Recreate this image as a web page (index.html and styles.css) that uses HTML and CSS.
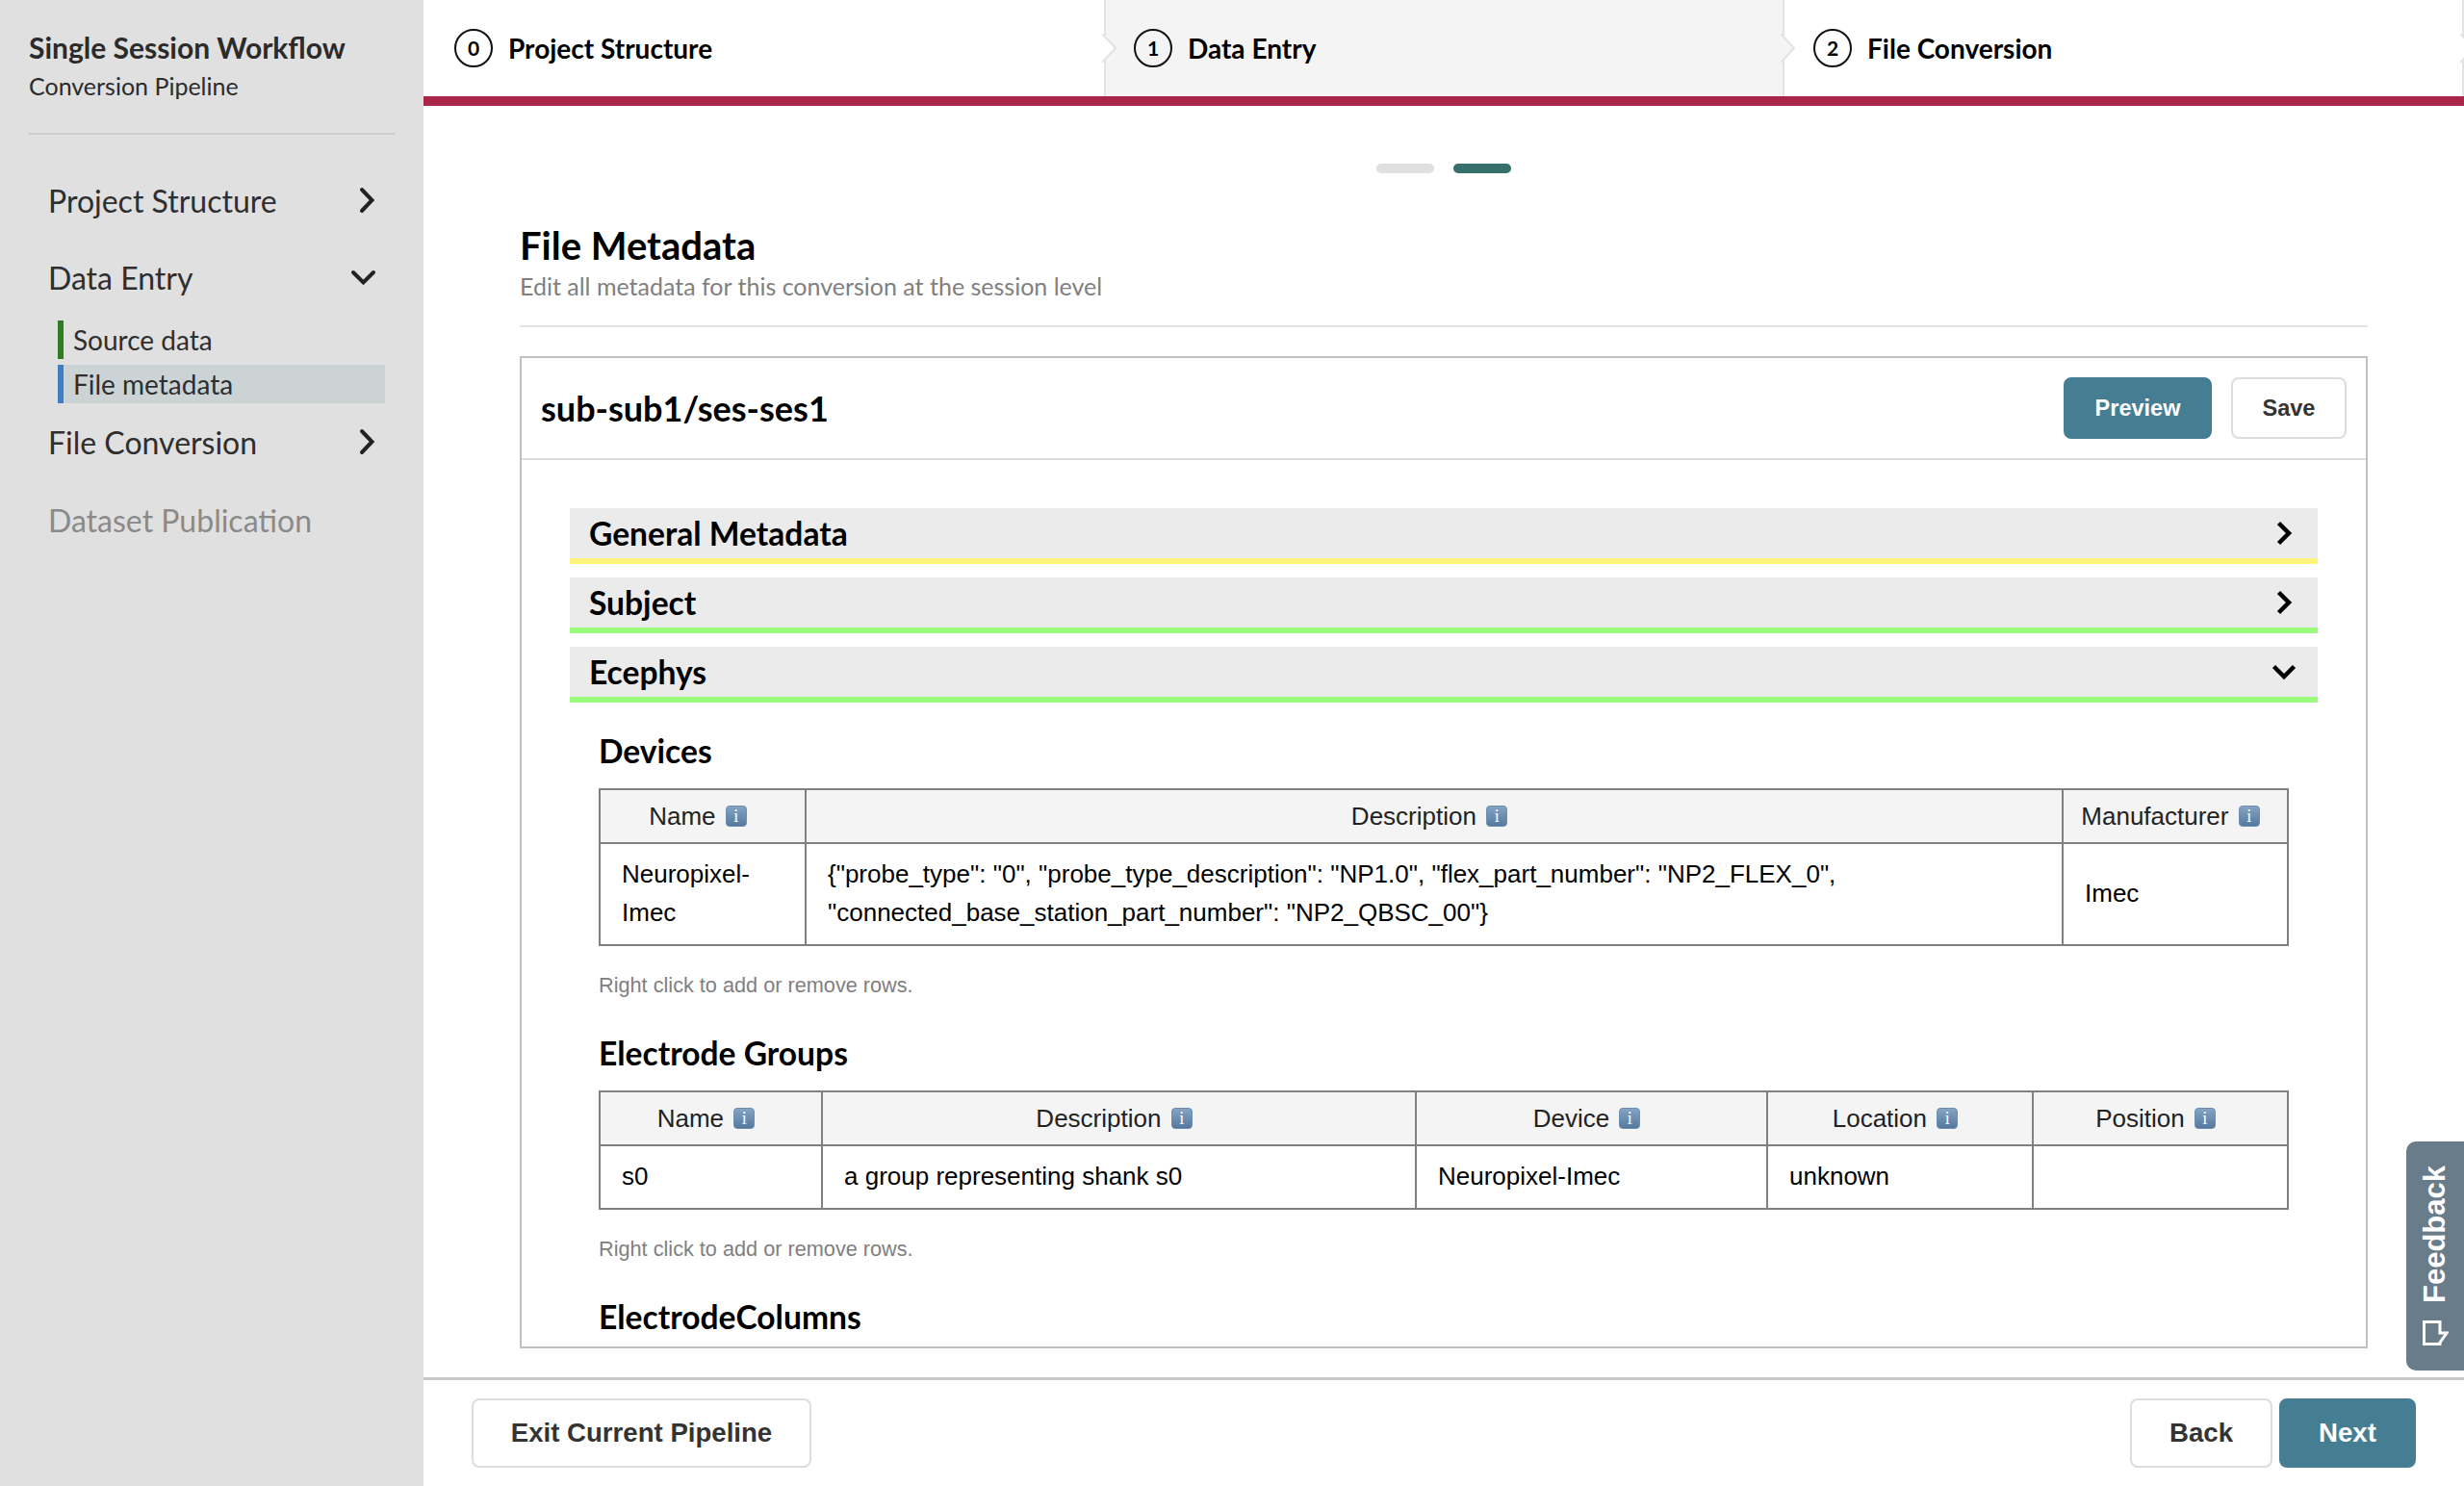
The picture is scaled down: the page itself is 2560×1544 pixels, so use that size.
FILE: index.html
```html
<!DOCTYPE html>
<html>
<head>
    <meta charset="utf-8">
    <title>Single Session Workflow</title>
    <link rel="stylesheet" href="styles.css">
</head>
<body>
    <div class="app">
        <div class="sidebar">
            <div class="side-head">
                <div class="side-title">Single Session Workflow</div>
                <div class="side-sub">Conversion Pipeline</div>
            </div>
            <div class="nav-item first">
                <span>Project Structure</span>
                <svg class="nav-chev" viewBox="0 0 30 30"><polyline points="12,4 22.5,15 12,26"/></svg>
            </div>
            <div class="nav-item">
                <span>Data Entry</span>
                <svg class="nav-chev" viewBox="0 0 30 30"><polyline points="3,10 13.5,20.5 24,10"/></svg>
            </div>
            <div class="sub-items">
                <div class="sub-item done">Source data</div>
                <div class="sub-item active">File metadata</div>
            </div>
            <div class="nav-item conv">
                <span>File Conversion</span>
                <svg class="nav-chev" viewBox="0 0 30 30"><polyline points="12,4 22.5,15 12,26"/></svg>
            </div>
            <div class="nav-item disabled">
                <span>Dataset Publication</span>
            </div>
        </div>

        <div class="main">
            <div class="steps">
                <div class="step">
                    <span class="step-num">0</span>Project Structure
                    <svg class="step-arrow" viewBox="0 0 15 30"><polygon class="fill-white" points="0,0 14,15 0,30"/><polyline points="0,0 14,15 0,30"/></svg>
                </div>
                <div class="step current">
                    <span class="step-num">1</span>Data Entry
                    <svg class="step-arrow" viewBox="0 0 15 30"><polygon class="fill-grey" points="0,0 14,15 0,30"/><polyline points="0,0 14,15 0,30"/></svg>
                </div>
                <div class="step">
                    <span class="step-num">2</span>File Conversion
                    <svg class="step-arrow" viewBox="0 0 15 30"><polygon class="fill-white" points="0,0 14,15 0,30"/><polyline points="0,0 14,15 0,30"/></svg>
                </div>
            </div>

            <div class="content">
                <div class="dots">
                    <span class="dot"></span>
                    <span class="dot on"></span>
                </div>
                <h1 class="page-title">File Metadata</h1>
                <div class="page-sub">Edit all metadata for this conversion at the session level</div>

                <div class="card">
                    <div class="card-head">
                        <div class="card-title">sub-sub1/ses-ses1</div>
                        <button class="btn small primary">Preview</button>
                        <button class="btn small">Save</button>
                    </div>
                    <div class="card-body">
                        <div class="acc warn">
                            <span>General Metadata</span>
                            <svg class="acc-chev" viewBox="0 0 28 28"><polyline points="8.5,3.5 19,14 8.5,24.5"/></svg>
                        </div>
                        <div class="acc ok">
                            <span>Subject</span>
                            <svg class="acc-chev" viewBox="0 0 28 28"><polyline points="8.5,3.5 19,14 8.5,24.5"/></svg>
                        </div>
                        <div class="acc ok">
                            <span>Ecephys</span>
                            <svg class="acc-chev" viewBox="0 0 28 28"><polyline points="3.5,8.5 14,19 24.5,8.5"/></svg>
                        </div>

                        <div class="acc-body">
                            <h3 class="tbl-title devices-title">Devices</h3>
                            <table class="tbl devices">
                                <thead>
                                    <tr>
                                        <th>Name <i class="info">i</i></th>
                                        <th>Description <i class="info">i</i></th>
                                        <th>Manufacturer <i class="info">i</i></th>
                                    </tr>
                                </thead>
                                <tbody>
                                    <tr>
                                        <td>Neuropixel-Imec</td>
                                        <td>{"probe_type": "0", "probe_type_description": "NP1.0", "flex_part_number": "NP2_FLEX_0", "connected_base_station_part_number": "NP2_QBSC_00"}</td>
                                        <td>Imec</td>
                                    </tr>
                                </tbody>
                            </table>
                            <p class="hint">Right click to add or remove rows.</p>

                            <h3 class="tbl-title">Electrode Groups</h3>
                            <table class="tbl groups">
                                <thead>
                                    <tr>
                                        <th>Name <i class="info">i</i></th>
                                        <th>Description <i class="info">i</i></th>
                                        <th>Device <i class="info">i</i></th>
                                        <th>Location <i class="info">i</i></th>
                                        <th>Position <i class="info">i</i></th>
                                    </tr>
                                </thead>
                                <tbody>
                                    <tr>
                                        <td>s0</td>
                                        <td>a group representing shank s0</td>
                                        <td>Neuropixel-Imec</td>
                                        <td>unknown</td>
                                        <td></td>
                                    </tr>
                                </tbody>
                            </table>
                            <p class="hint">Right click to add or remove rows.</p>

                            <h3 class="tbl-title">ElectrodeColumns</h3>
                        </div>
                    </div>
                </div>
            </div>

            <div class="footer">
                <button class="btn large exit">Exit Current Pipeline</button>
                <button class="btn large back">Back</button>
                <button class="btn large primary next">Next</button>
            </div>
        </div>
    </div>

    <div class="feedback">
        <svg class="feedback-icon" viewBox="0 0 27 26"><path d="M1.5 1.5 H18 V13 H25 L18 23 V24.5 H1.5 Z"/></svg>
        <span>Feedback</span>
    </div>
</body>
</html>
```

FILE: styles.css
```css
/*page*/
html, body {
    margin: 0;
    height: 100%;
    background: white;
}

body {
    font-family: Lato, "Open Sans", sans-serif;
    color: black;
    overflow: hidden;
}

.app {
    display: flex;
    height: 1544px;
}

/*sidebar*/
.sidebar {
    width: 440px;
    flex: none;
    background-color: #e0e0e0;
    padding: 0 30px;
    box-sizing: border-box;
}

.side-head {
    height: 140px;
    padding-top: 29px;
    box-sizing: border-box;
    border-bottom: 2px solid #cccccc;
}

.side-title {
    font-size: 30px;
    font-weight: 700;
    line-height: 40px;
    color: #2b2b2b;
}

.side-sub {
    font-size: 25px;
    line-height: 36px;
    margin-top: 2px;
    color: #2b2b2b;
}

.nav-item {
    display: flex;
    align-items: center;
    justify-content: space-between;
    height: 40px;
    margin: 40px 0 0 20px;
    padding-right: 16px;
    font-size: 32px;
    color: #2e2e2e;
}

.nav-item.first {
    margin-top: 48px;
}

.nav-item.conv {
    margin-top: 20px;
}

.nav-item.disabled {
    margin-top: 41px;
    color: #8a8a8a;
}

.nav-chev {
    width: 30px;
    height: 30px;
    fill: none;
    stroke: #222222;
    stroke-width: 4;
    stroke-linecap: round;
}

.sub-items {
    margin: 25px 10px 0 30px;
}

.sub-item {
    height: 40px;
    line-height: 40px;
    padding-left: 10px;
    border-left: 6px solid transparent;
    font-size: 28px;
    color: #2e2e2e;
    margin-bottom: 6px;
}

.sub-item.done {
    border-left-color: #2f7d1f;
}

.sub-item.active {
    border-left-color: #3d7fc0;
    background-color: #ccd3d5;
}

/*main column*/
.main {
    flex: 1;
    min-width: 0;
    display: flex;
    flex-direction: column;
}

.steps {
    display: flex;
    height: 110px;
    box-sizing: border-box;
    border-bottom: 10px solid #a9264a;
}

.step {
    flex: none;
    width: 709px;
    display: flex;
    align-items: center;
    position: relative;
    padding-left: 32px;
    font-size: 28px;
    font-weight: 700;
    border-right: 2px solid #e3e3e3;
    box-sizing: border-box;
}

.step.current {
    width: 705px;
    background-color: #f4f4f4;
    padding-left: 29px;
}

.step:last-child {
    flex: 1;
    width: auto;
    padding-left: 30px;
}

.step-num {
    width: 36px;
    height: 36px;
    flex: none;
    margin-right: 16px;
    border: 2px solid #111111;
    border-radius: 50%;
    font-size: 21px;
    font-weight: 700;
    line-height: 36px;
    text-align: center;
}

.step-arrow {
    position: absolute;
    left: 100%;
    top: 35px;
    width: 15px;
    height: 30px;
    margin-left: -2px;
    z-index: 1;
    fill: none;
    stroke: #e3e3e3;
    stroke-width: 2;
}

.step-arrow .fill-white {
    fill: white;
    stroke: none;
}

.step-arrow .fill-grey {
    fill: #f4f4f4;
    stroke: none;
}

/*content*/
.content {
    flex: 1;
    min-height: 0;
    display: flex;
    flex-direction: column;
    padding: 60px 100px 30px;
}

.dots {
    display: flex;
    justify-content: center;
    gap: 20px;
}

.dot {
    width: 60px;
    height: 10px;
    border-radius: 5px;
    background-color: #e0e0e0;
}

.dot.on {
    background-color: #35706c;
}

.page-title {
    margin: 52px 0 0;
    font-size: 40px;
    font-weight: 700;
    line-height: 46px;
}

.page-sub {
    font-size: 25px;
    line-height: 34px;
    margin-top: 2px;
    padding-bottom: 24px;
    color: #808080;
    border-bottom: 2px solid #e3e3e3;
}

.card {
    flex: 1;
    min-height: 0;
    margin-top: 30px;
    display: flex;
    flex-direction: column;
    border: 2px solid #c0c0c0;
    overflow: hidden;
}

.card-head {
    display: flex;
    align-items: center;
    gap: 20px;
    height: 106px;
    flex: none;
    padding: 0 20px;
    box-sizing: border-box;
    border-bottom: 2px solid #dddddd;
}

.card-title {
    flex: 1;
    font-size: 36px;
    font-weight: 700;
}

.card-body {
    flex: 1;
    min-height: 0;
    overflow: hidden;
    padding: 50px 50px 0;
}

/*buttons*/
.btn {
    font-family: "Liberation Sans", sans-serif;
    font-weight: 700;
    color: #333333;
    background-color: white;
    border: 2px solid #dddddd;
    border-radius: 8px;
    box-sizing: border-box;
}

.btn.primary {
    color: white;
    background-color: #457e92;
    border-color: #457e92;
}

.btn.small {
    height: 64px;
    font-size: 23.5px;
    width: 120px;
}

.btn.small.primary {
    width: 154px;
}

.btn.large {
    height: 72px;
    font-size: 27.6px;
}

/*accordion*/
.acc {
    display: flex;
    align-items: center;
    justify-content: space-between;
    height: 58px;
    margin-bottom: 14px;
    padding: 0 21px 0 20px;
    box-sizing: border-box;
    background-color: #ebebeb;
    border-bottom: 6px solid #9bfb7a;
    font-size: 33.6px;
    font-weight: 700;
}

.acc.warn {
    border-bottom-color: #fff47a;
}

.acc-chev {
    width: 28px;
    height: 28px;
    fill: none;
    stroke: black;
    stroke-width: 4.5;
}

.acc-body {
    padding: 0 30px;
}

.tbl-title {
    margin: 0;
    font-size: 33.6px;
    font-weight: 700;
    line-height: 40px;
}

.devices-title {
    margin-top: 30px;
}

.tbl {
    width: 100%;
    margin-top: 19px;
    table-layout: fixed;
    border-collapse: collapse;
    font-family: "Liberation Sans", sans-serif;
    font-size: 26px;
}

.tbl th, .tbl td {
    border: 2px solid #808080;
    overflow: hidden;
}

.tbl th {
    height: 54px;
    padding: 0 10px 0 0;
    font-weight: 400;
    text-align: center;
    color: #222222;
    background-color: #f4f4f4;
}

.tbl td {
    line-height: 40px;
    padding: 11px 22px 13px;
    color: black;
}

.devices th:nth-child(1) { width: 202px; }
.devices th:nth-child(3) { width: 222px; }

.groups th:nth-child(1) { width: 219px; }
.groups th:nth-child(2) { width: 605px; }
.groups th:nth-child(3) { width: 353px; }
.groups th:nth-child(4) { width: 264px; }

.info {
    display: inline-block;
    overflow: hidden;
    width: 22px;
    height: 22px;
    margin-left: 3px;
    border-radius: 4px;
    background: linear-gradient(#85a3c2, #55799f);
    border: 1px solid #6c8fb0;
    box-sizing: border-box;
    color: white;
    font-family: "Liberation Serif", serif;
    font-style: normal;
    font-weight: 400;
    font-size: 18px;
    line-height: 20px;
    text-align: center;
    vertical-align: -2px;
}

.hint {
    margin: 28px 0 37px;
    font-family: "Liberation Sans", sans-serif;
    font-size: 21.7px;
    line-height: 26px;
    color: #808080;
}

/*footer*/
.footer {
    flex: none;
    display: flex;
    align-items: center;
    gap: 7px;
    height: 113px;
    padding: 0 50px;
    box-sizing: border-box;
    border-top: 3px solid #c8c8c8;
}

.exit {
    width: 353px;
    margin-right: auto;
}

.back {
    width: 148px;
}

.next {
    width: 142px;
}

/*feedback tab*/
.feedback {
    position: absolute;
    right: 0;
    top: 1186px;
    width: 60px;
    height: 238px;
    display: flex;
    flex-direction: column-reverse;
    align-items: center;
    gap: 18px;
    padding: 24px 0 26px;
    box-sizing: border-box;
    border-radius: 10px 0 0 10px;
    background-color: #687c8a;
    color: white;
    font-family: "Liberation Sans", sans-serif;
    font-weight: 700;
    font-size: 31px;
}

.feedback span {
    writing-mode: vertical-rl;
    transform: rotate(180deg);
}

.feedback-icon {
    width: 27px;
    height: 26px;
    fill: none;
    stroke: white;
    stroke-width: 3;
}
```
